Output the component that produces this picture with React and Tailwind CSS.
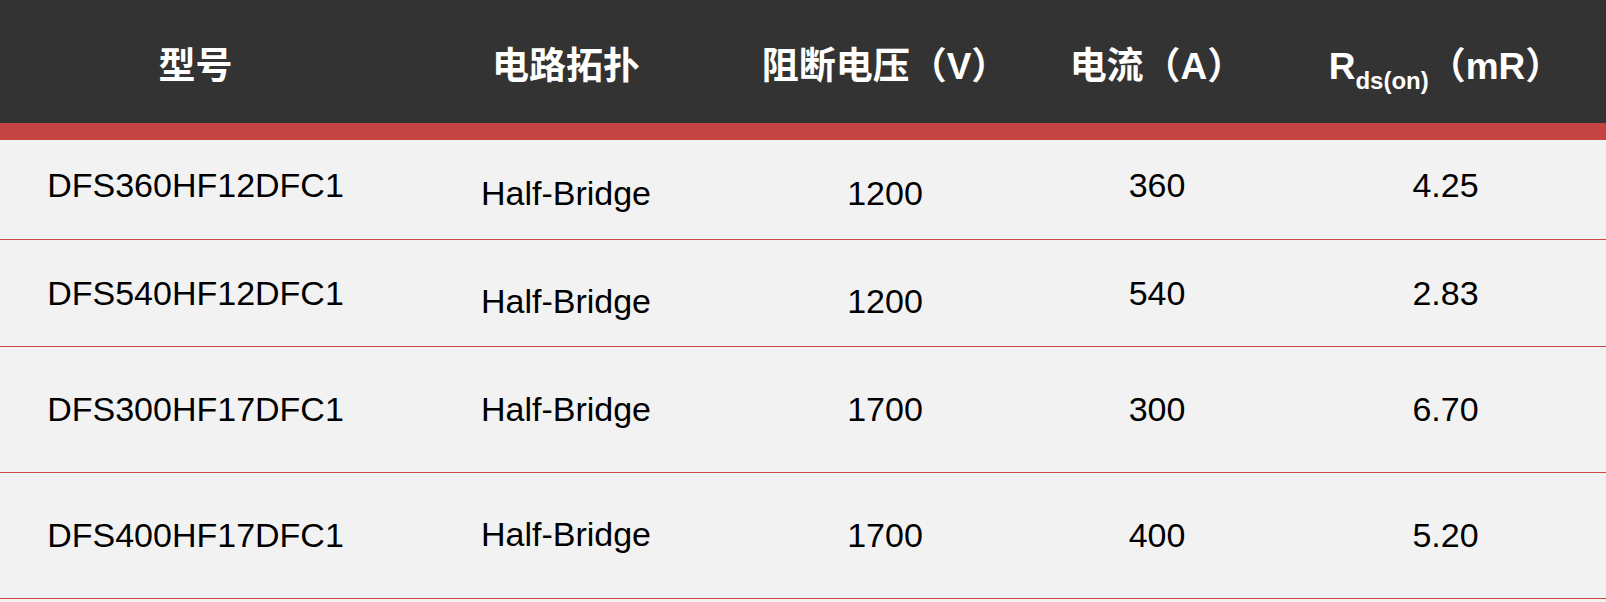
const cols = 'grid grid-cols-[391px_350px_288px_256px_1fr]';

const rows = [
  {
    h: 'h-[99px]',
    cells: [
      ['DFS360HF12DFC1', 'pb-2'],
      ['Half-Bridge', 'pt-2'],
      ['1200', 'pt-2'],
      ['360', 'pb-2'],
      ['4.25', 'pb-2'],
    ],
  },
  {
    h: 'h-[106px]',
    cells: [
      ['DFS540HF12DFC1', ''],
      ['Half-Bridge', 'pt-4'],
      ['1200', 'pt-4'],
      ['540', ''],
      ['2.83', ''],
    ],
  },
  {
    h: 'h-[125px]',
    cells: [
      ['DFS300HF17DFC1', ''],
      ['Half-Bridge', ''],
      ['1700', ''],
      ['300', ''],
      ['6.70', ''],
    ],
  },
  {
    h: 'h-[125px]',
    cells: [
      ['DFS400HF17DFC1', ''],
      ['Half-Bridge', 'pb-[3px]'],
      ['1700', ''],
      ['400', ''],
      ['5.20', ''],
    ],
  },
];

export default function App() {
  return (
    <div className="min-h-screen w-[1606px] bg-[#f2f2f2] font-['Liberation_Sans','Noto_Sans_CJK_SC',sans-serif]">
      {/* 表头 */}
      <div className={`${cols} h-[123px] items-center pt-[9px] bg-[#333333] text-white text-[37px] font-bold leading-none`}>
        <div className="text-center">型号</div>
        <div className="text-center">电路拓扑</div>
        <div className="text-center">阻断电压（V）</div>
        <div className="text-center">电流（A）</div>
        <div className="text-center">
          R<sub className="text-[24px] bottom-[-10px]">ds(on)</sub>（mR）
        </div>
      </div>
      <div className="h-[17px] bg-[#c44444]" />

      {/* 数据行 */}
      {rows.map((row, i) => (
        <div key={i} className={`${cols} ${row.h} box-content border-b border-[#cf4848] text-[34px] text-black`}>
          {row.cells.map(([text, pad], j) => (
            <div key={j} className={`flex items-center justify-center ${pad}`}>
              {text}
            </div>
          ))}
        </div>
      ))}
    </div>
  );
}
